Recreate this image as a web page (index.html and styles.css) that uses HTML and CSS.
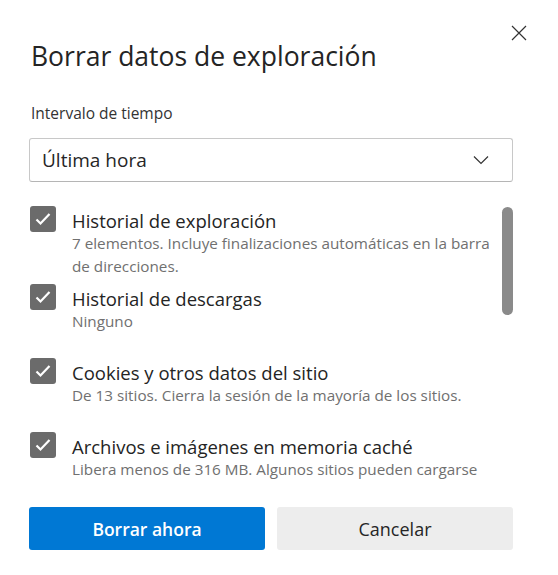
FILE: index.html
```html
<!DOCTYPE html>
<html lang="es">
<head>
  <meta charset="UTF-8">
  <meta name="viewport" content="width=device-width, initial-scale=1.0">
  <title>Borrar datos de exploración</title>
  <link rel="stylesheet" href="styles.css">
</head>
<body>
  <div class="dialog">
    <button class="close" aria-label="Cerrar">
      <svg width="16" height="16" viewBox="0 0 16 16"><path d="M1 1 L15 15 M15 1 L1 15" stroke="#333" stroke-width="1.2" fill="none"/></svg>
    </button>

    <h1 class="title">Borrar datos de exploración</h1>

    <div class="field-label">Intervalo de tiempo</div>
    <div class="select">
      <span>Última hora</span>
      <svg width="16" height="10" viewBox="0 0 16 10"><path d="M1 1.5 L8 8.5 L15 1.5" stroke="#333" stroke-width="1.2" fill="none"/></svg>
    </div>

    <div class="list-wrap">
      <ul class="list">
        <li class="item">
          <span class="check"><svg width="26" height="26" viewBox="0 0 26 26"><path d="M6.5 13.5 L10.5 17.5 L19.5 8" stroke="#fff" stroke-width="2.2" fill="none"/></svg></span>
          <div class="item-text">
            <div class="item-title">Historial de exploración</div>
            <div class="item-desc">7 elementos. Incluye finalizaciones automáticas en la barra de direcciones.</div>
          </div>
        </li>
        <li class="item">
          <span class="check"><svg width="26" height="26" viewBox="0 0 26 26"><path d="M6.5 13.5 L10.5 17.5 L19.5 8" stroke="#fff" stroke-width="2.2" fill="none"/></svg></span>
          <div class="item-text">
            <div class="item-title">Historial de descargas</div>
            <div class="item-desc">Ninguno</div>
          </div>
        </li>
        <li class="item">
          <span class="check"><svg width="26" height="26" viewBox="0 0 26 26"><path d="M6.5 13.5 L10.5 17.5 L19.5 8" stroke="#fff" stroke-width="2.2" fill="none"/></svg></span>
          <div class="item-text">
            <div class="item-title">Cookies y otros datos del sitio</div>
            <div class="item-desc">De 13 sitios. Cierra la sesión de la mayoría de los sitios.</div>
          </div>
        </li>
        <li class="item">
          <span class="check"><svg width="26" height="26" viewBox="0 0 26 26"><path d="M6.5 13.5 L10.5 17.5 L19.5 8" stroke="#fff" stroke-width="2.2" fill="none"/></svg></span>
          <div class="item-text">
            <div class="item-title">Archivos e imágenes en memoria caché</div>
            <div class="item-desc">Libera menos de 316 MB. Algunos sitios pueden cargarse</div>
          </div>
        </li>
      </ul>
      <div class="thumb"></div>
    </div>

    <div class="actions">
      <button class="btn primary">Borrar ahora</button>
      <button class="btn secondary">Cancelar</button>
    </div>
  </div>
</body>
</html>
```

FILE: styles.css
```css
*{
  font-family: "Open Sans", sans-serif;
  box-sizing: border-box;
}
body{
  margin: 0;
  background-color: #fff;
}
.dialog{
  position: relative;
  width: 558px;
  height: 575px;
  padding: 39px 45px 0 29px;
}
.close{
  position: absolute;
  top: 25px;
  right: 31px;
  width: 16px;
  height: 16px;
  padding: 0;
  border: none;
  background: none;
  display: flex;
}
.title{
  margin: 0;
  font-size: 26.5px;
  line-height: 34px;
  font-weight: 400;
  color: #242424;
  padding-left: 2px;
}
.field-label{
  margin-top: 30px;
  font-size: 15.5px;
  line-height: 20px;
  color: #333;
  padding-left: 2px;
}
.select{
  margin-top: 15px;
  height: 44px;
  border: 1px solid #c8c8c8;
  border-bottom-color: #b5b5b5;
  border-radius: 3px;
  display: flex;
  align-items: center;
  justify-content: space-between;
  padding: 0 23px 0 12px;
  font-size: 19px;
  color: #262626;
}
.list-wrap{
  position: relative;
  margin-top: 24px;
  height: 276px;
  overflow: hidden;
}
.list{
  list-style: none;
  margin: 0;
  padding: 0;
}
.item{
  display: flex;
  gap: 16px;
  min-height: 68px;
  margin-bottom: 6px;
  padding-left: 1px;
}
.check{
  flex: none;
  width: 26px;
  height: 26px;
  border-radius: 3px;
  background-color: #6b6b6b;
  display: flex;
}
.item-text{
  width: 428px;
  padding-top: 4px;
}
.item-title{
  font-size: 18.5px;
  line-height: 22px;
  color: #242424;
}
.item-desc{
  font-size: 15.25px;
  line-height: 23px;
  color: #707070;
}
.thumb{
  position: absolute;
  top: 1px;
  right: 0;
  width: 11px;
  height: 108px;
  border-radius: 6px;
  background-color: #8a8a8a;
}
.actions{
  margin-top: 25px;
  display: grid;
  grid-template-columns: 1fr 1fr;
  gap: 12px;
}
.btn{
  height: 43px;
  border: none;
  border-radius: 3px;
  font-size: 17.5px;
  font-weight: 600;
}
.primary{
  background-color: #0078d4;
  color: #fff;
}
.secondary{
  background-color: #ededed;
  color: #262626;
  font-size: 18px;
  font-weight: 400;
}
```
